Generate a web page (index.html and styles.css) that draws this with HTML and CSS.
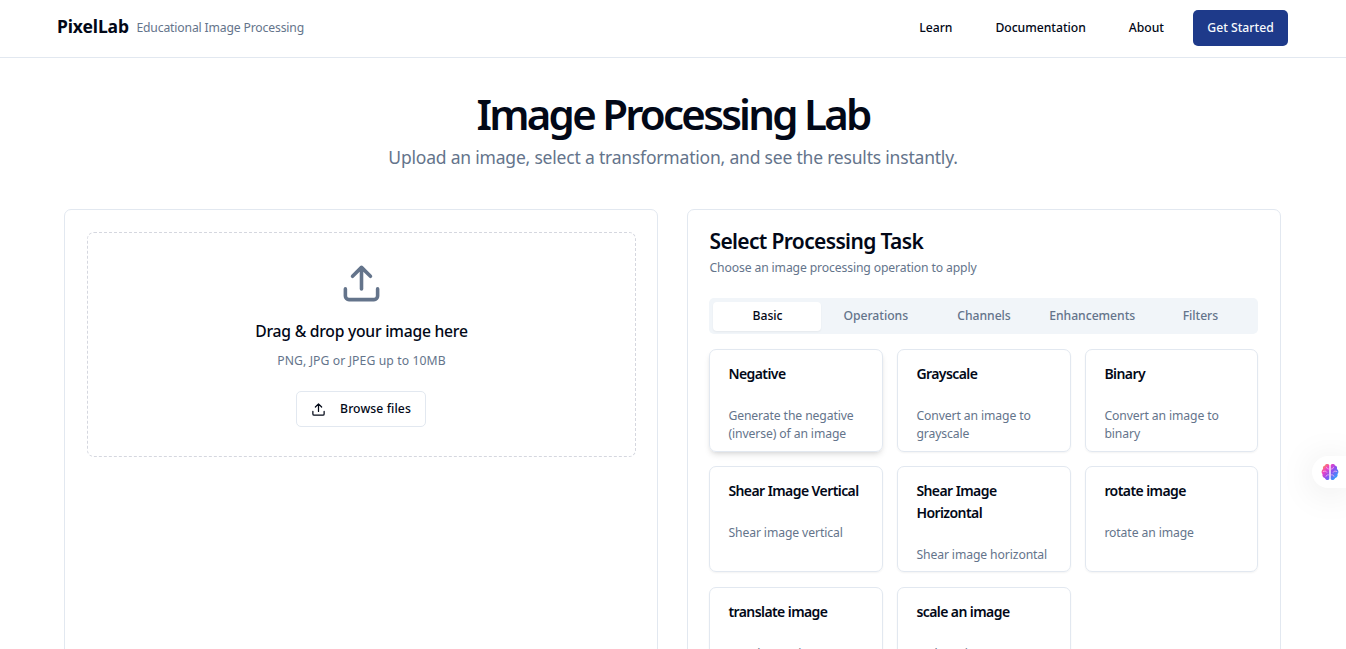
FILE: index.html
```html
<!DOCTYPE html>
<html lang="en">
<head>
<meta charset="utf-8">
<title>PixelLab</title>
<link rel="stylesheet" href="styles.css">
</head>
<body>
<header class="topbar">
  <div class="brand"><span class="brand-name">PixelLab</span><span class="brand-tag">Educational Image Processing</span></div>
  <nav class="nav"><a class="nav-learn">Learn</a><a class="nav-docs">Documentation</a><a class="nav-about">About</a><button class="cta">Get Started</button></nav>
</header>
<main>
  <div class="hero"><h1>Image Processing Lab</h1><p>Upload an image, select a transformation, and see the results instantly.</p></div>
  <div class="columns">
    <section class="panel upload">
      <div class="dropzone">
        <svg class="drop-icon" viewBox="0 0 24 24"><path d="M21 15v4a2 2 0 0 1-2 2H5a2 2 0 0 1-2-2v-4M17 8l-5-5-5 5M12 3v12"/></svg>
        <p class="drop-title">Drag &amp; drop your image here</p>
        <p class="drop-hint">PNG, JPG or JPEG up to 10MB</p>
        <button class="browse"><svg viewBox="0 0 24 24"><path d="M21 15v4a2 2 0 0 1-2 2H5a2 2 0 0 1-2-2v-4M17 8l-5-5-5 5M12 3v12"/></svg>Browse files</button>
      </div>
    </section>
    <section class="panel tasks">
      <h2>Select Processing Task</h2>
      <p class="tasks-hint">Choose an image processing operation to apply</p>
      <div class="tabs"><button class="tab active">Basic</button><button class="tab">Operations</button><button class="tab">Channels</button><button class="tab">Enhancements</button><button class="tab">Filters</button></div>
      <div class="grid">
        <article class="card selected"><h3>Negative</h3><p>Generate the negative<br>(inverse) of an image</p></article>
        <article class="card"><h3>Grayscale</h3><p>Convert an image to<br>grayscale</p></article>
        <article class="card"><h3>Binary</h3><p>Convert an image to<br>binary</p></article>
        <article class="card"><h3>Shear Image Vertical</h3><p>Shear image vertical</p></article>
        <article class="card"><h3>Shear Image<br>Horizontal</h3><p>Shear image horizontal</p></article>
        <article class="card"><h3>rotate image</h3><p>rotate an image</p></article>
        <article class="card"><h3>translate image</h3><p>translate an image</p></article>
        <article class="card"><h3>scale an image</h3><p>scale an image</p></article>
      </div>
    </section>
  </div>
</main>
<aside class="assistant">
  <svg viewBox="0 0 18 18">
    <defs><linearGradient id="brain" gradientUnits="userSpaceOnUse" x1="2" y1="2" x2="16" y2="15"><stop offset="0" stop-color="#ff9a4c"/><stop offset=".28" stop-color="#ee3fc4"/><stop offset=".58" stop-color="#8b50f0"/><stop offset="1" stop-color="#27a8ff"/></linearGradient></defs>
    <path fill="url(#brain)" d="M8.300 2.200C7.700.4 4.500.5 4 2.400 2.200 2.700 1.500 4.500 2.100 5.900.3 7 .1 9.800 1.500 11c-.5 2 .5 3.600 2.300 4 .8 2.300 3.900 2.700 4.500.8zM9.700 2.200c.6-1.800 3.800-1.700 4.300.2 1.800.3 2.500 2.100 1.900 3.500 1.800 1.100 2 3.900.6 5.100.5 2-.5 3.600-2.300 4-.8 2.300-3.900 2.700-4.500.8z"/>
    <path class="folds" d="M8.300 6C6.500 6.300 5.600 5.500 5.500 4.300M2.200 8.500c1.500-.7 3-.5 3.600.7M8.300 12c-1.500-.5-3-.1-3.300 1.300M9.700 6c1.800.3 2.700-.5 2.800-1.700M15.800 8.500c-1.500-.7-3-.5-3.600.7M9.700 12c1.500-.5 3-.1 3.300 1.300"/>
  </svg>
</aside>
</body>
</html>
```

FILE: styles.css
```css
* { box-sizing: border-box; }
body { margin: 0; height: 649px; overflow: hidden; background: #fff; color: #020817; font-family: "Noto Sans", "Open Sans", sans-serif; font-size: 12.2px; line-height: 18px; }
h1, h2, h3, p { margin: 0; }
button { border: 0; padding: 0; background: none; color: inherit; font: inherit; }
svg { fill: none; stroke: currentColor; stroke-width: 2; stroke-linecap: round; stroke-linejoin: round; }
.topbar { height: 58px; padding: 0 58px 2px 57px; border-bottom: 1px solid #e2e8f0; display: flex; align-items: center; justify-content: space-between; }
.brand { display: flex; align-items: center; gap: 7.5px; }
.brand-name { padding-bottom: 3px; font-size: 17.5px; font-weight: 700; letter-spacing: -.12px; }
.brand-tag { color: #64748b; letter-spacing: -.16px; }
.nav { display: flex; align-items: center; font-weight: 500; letter-spacing: -.03px; }
.nav-docs { margin-left: 43px; }
.nav-about { margin: 0 29px 0 43px; }
.cta { width: 95px; height: 36px; border-radius: 5px; background: #1e3a8a; color: #f8fafc; }
.hero { padding-top: 34px; text-align: center; }
.hero h1 { font-size: 42px; font-weight: 600; line-height: 43px; letter-spacing: -2.75px; }
.hero p { margin-top: 9px; color: #64748b; font-size: 17.5px; line-height: 26px; letter-spacing: -.2px; }
.columns { margin-top: 39px; padding: 0 65px 0 64px; display: grid; grid-template-columns: 594px 594px; gap: 29px; }
.panel { height: 900px; border: 1px solid #e2e8f0; border-radius: 7px; padding: 22px 21px 0 22px; }
.dropzone { height: 225px; border: 1px dashed #d5d7df; border-radius: 7px; display: flex; flex-direction: column; align-items: center; padding-top: 29px; }
.drop-icon { width: 43px; height: 43px; color: #64748b; }
.drop-title { margin-top: 13px; font-size: 15.7px; font-weight: 500; line-height: 26px; letter-spacing: -.25px; }
.drop-hint { margin-top: 8px; color: #64748b; letter-spacing: .1px; }
.browse { width: 130px; height: 36px; margin: 21px 1px 0 0; border: 1px solid #e2e8f0; border-radius: 5px; display: flex; align-items: center; justify-content: center; gap: 14px; font-weight: 500; letter-spacing: .08px; }
.browse svg { width: 15px; height: 15px; }
.tasks { padding-top: 20px; padding-left: 21px; padding-right: 22px; }
.tasks h2 { padding-left: .5px; font-size: 21px; font-weight: 600; line-height: 22px; letter-spacing: -.65px; }
.tasks-hint { margin-top: 7px; padding-left: .5px; color: #64748b; letter-spacing: -.13px; }
.tabs { margin-top: 21px; height: 36px; padding: 4px; border-radius: 5px; background: #f1f5f9; display: grid; grid-template-columns: repeat(5, 1fr); color: #64748b; font-weight: 500; }
.tab { height: 29px; padding: 0 0 2px 1px; letter-spacing: -.04px; }
.tab.active { border-radius: 4px; background: #fff; color: #020817; box-shadow: 0 1px 2px rgb(0 0 0 / 5%); }
.grid { margin-top: 15px; display: grid; grid-template-columns: 174px 174px 173px; grid-template-rows: 103px 106px 106px; gap: 14.4px 14px; }
.card { border: 1px solid #e2e8f0; border-radius: 7px; padding: 13px 10px 13px 18.4px; box-shadow: 0 1px 2px rgb(0 0 0 / 5%); white-space: nowrap; }
.card.selected { box-shadow: 0 4px 6px -1px rgb(0 0 0 / 10%), 0 2px 4px -2px rgb(0 0 0 / 10%); }
.card h3 { font-size: 14px; font-weight: 600; line-height: 21.6px; letter-spacing: -.58px; }
.card p { margin-top: 22.5px; color: #64748b; letter-spacing: -.11px; }
.assistant { position: absolute; right: 0; top: 456px; width: 34px; height: 32px; border-radius: 16px 0 0 16px; background: #fff; box-shadow: 0 4px 36px rgb(0 0 0 / 10%); padding: 7px 0 0 9px; }
.assistant svg { display: block; width: 18px; height: 18px; stroke: none; }
.assistant .folds { stroke: #f3b8f5; stroke-width: .8; }
```
